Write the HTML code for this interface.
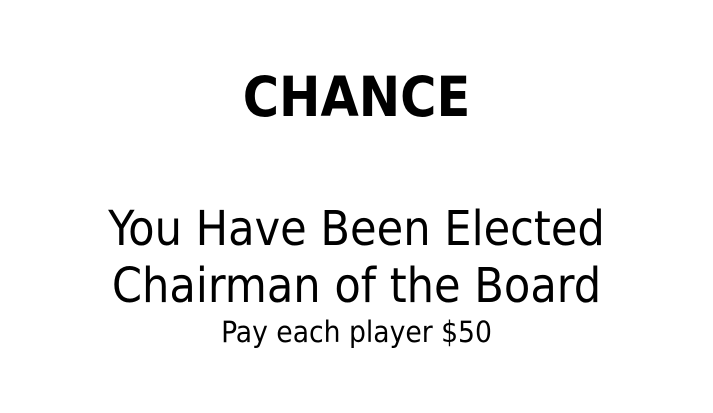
<!DOCTYPE html>
<html><head><style>
html,body{margin:0;padding:0;background:#fff;width:713px;height:413px;overflow:hidden}
div{position:absolute;left:0;width:713px;text-align:center;white-space:nowrap;color:#000;font-family:"DejaVu Sans Condensed","DejaVu Sans",sans-serif;line-height:normal}
#t{top:65px;font-size:55px;font-weight:bold}
#a{top:201px;font-size:48px}
#b{top:258px;font-size:48px}
#c{top:315px;font-size:29.6px}
</style></head><body>
<div id="t">CHANCE</div>
<div id="a">You Have Been Elected</div>
<div id="b">Chairman of the Board</div>
<div id="c">Pay each player $50</div>
</body></html>
